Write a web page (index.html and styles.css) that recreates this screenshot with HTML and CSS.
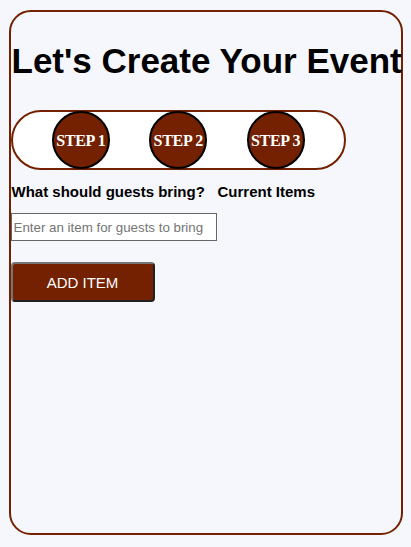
FILE: index.html
```html
<!DOCTYPE html>
<html lang="en">
<head>
<meta charset="utf-8">
<title>Create Event</title>
<link rel="stylesheet" href="styles.css">
</head>
<body>
<main class="card">
  <h1 class="title">Let's Create Your Event</h1>
  <div class="steps">
    <div class="step">STEP 1</div>
    <div class="step">STEP 2</div>
    <div class="step">STEP 3</div>
  </div>
  <div class="columns">
    <section class="add-col">
      <h3 class="col-title">What should guests bring?</h3>
      <input class="item-input" type="text" placeholder="Enter an item for guests to bring">
      <button class="add-btn" type="button">ADD ITEM</button>
    </section>
    <section class="list-col">
      <h3 class="col-title">Current Items</h3>
    </section>
  </div>
</main>
</body>
</html>
```
FILE: styles.css
```css
html, body {
  margin: 0;
  padding: 0;
  background: #f6f7fc;
  font-family: "Liberation Sans", Arial, sans-serif;
}

.card {
  box-sizing: border-box;
  width: 394px;
  height: 525px;
  margin: 10px auto 0;
  border: 2px solid #732100;
  border-radius: 22px;
}

.title {
  margin: 29px 0 0;
  font-size: 35px;
  font-weight: bold;
  color: #000;
  white-space: nowrap;
  padding-left: 1px;
}

.steps {
  width: 85%;
  height: 56px;
  margin-top: 29px;
  background: #fff;
  border: 2px solid #732100;
  border-radius: 30px;
  display: flex;
  align-items: center;
  justify-content: space-evenly;
}

.step {
  box-sizing: border-box;
  width: 58px;
  height: 58px;
  flex: none;
  border-radius: 50%;
  border: 2px solid #000;
  background: #732100;
  color: #fff;
  font-family: "Liberation Serif", "Times New Roman", serif;
  font-weight: bold;
  font-size: 16px;
  display: flex;
  align-items: center;
  justify-content: center;
  white-space: nowrap;
  letter-spacing: -0.3px;
  padding-top: 2px;
}

.columns {
  display: flex;
  margin-top: 13px;
}

.add-col {
  display: flex;
  flex-direction: column;
  align-items: flex-start;
  width: 206px;
}

.col-title {
  margin: 0;
  font-size: 15px;
  font-weight: bold;
  white-space: nowrap;
  padding-left: 1px;
}

.item-input {
  box-sizing: border-box;
  width: 206px;
  height: 28px;
  margin-top: 13px;
  padding: 0 2px;
  border: 1px solid #666;
  border-radius: 0;
  background: #fff;
  font-family: "Liberation Sans", Arial, sans-serif;
  font-size: 13.333px;
}

.item-input::placeholder {
  color: #757575;
}

.add-btn {
  box-sizing: border-box;
  width: 144px;
  height: 40px;
  margin-top: 21px;
  background: #732100;
  color: #fff;
  border: 2px outset #767676;
  border-radius: 4px;
  font-family: "Liberation Sans", Arial, sans-serif;
  font-size: 15px;
}
```
